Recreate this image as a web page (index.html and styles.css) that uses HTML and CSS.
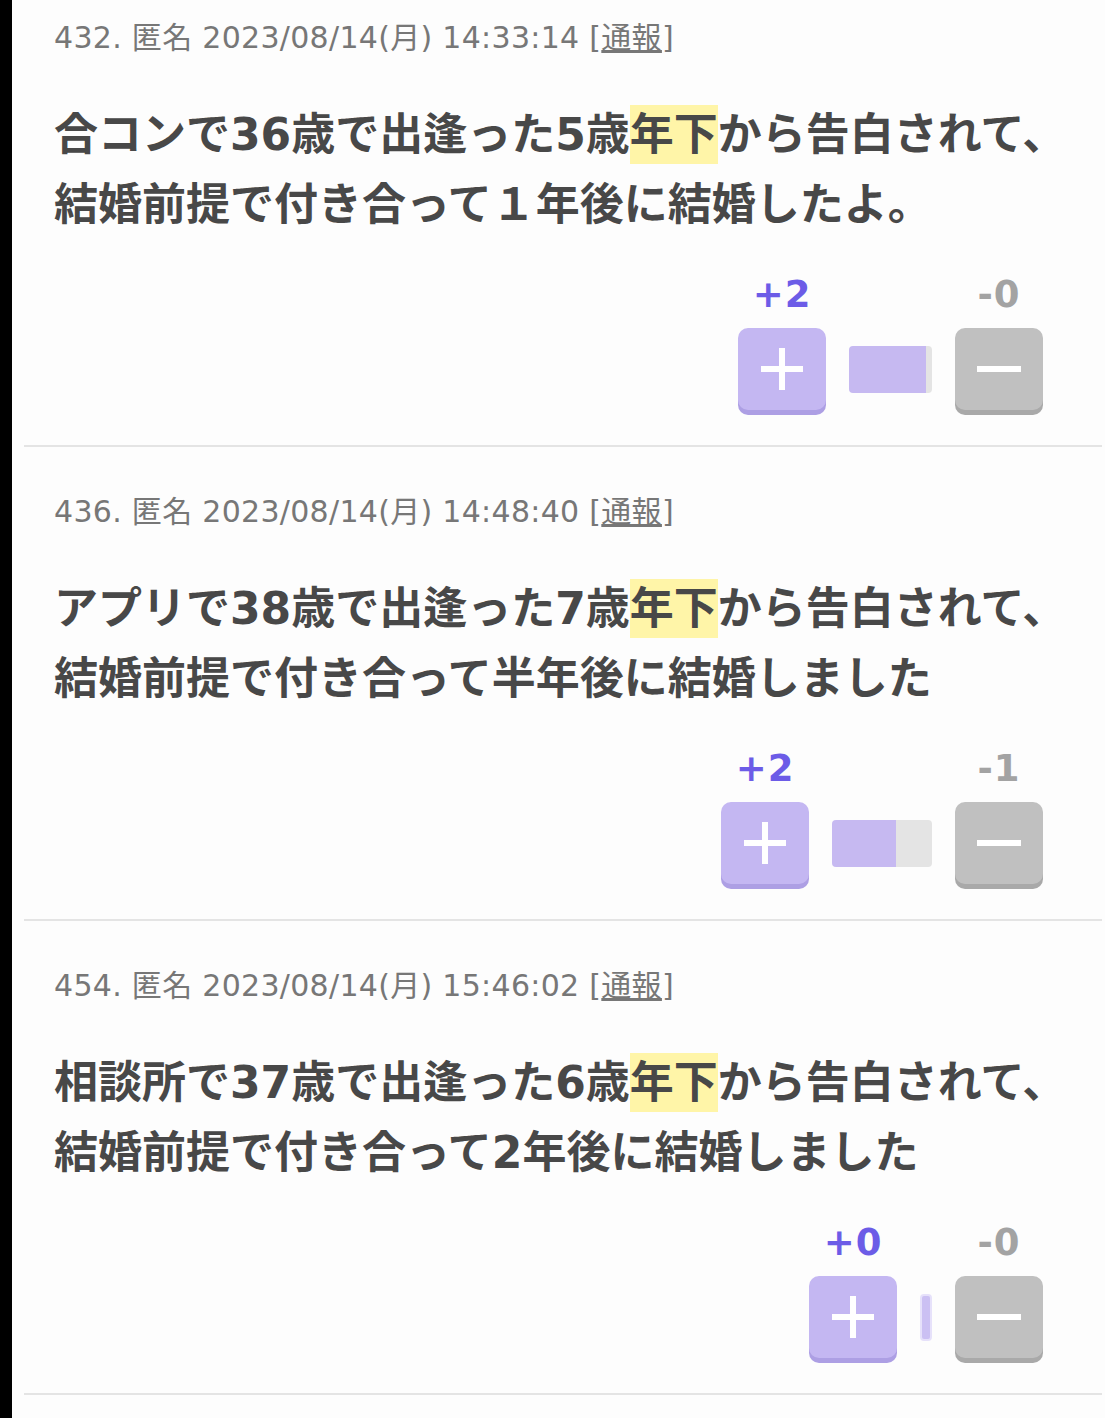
FILE: index.html
```html
<!DOCTYPE html>
<html lang="ja">
<head>
<meta charset="utf-8">
<title>comments</title>
<link rel="stylesheet" href="styles.css">
</head>
<body>
<div class="thread">
  <article class="post">
    <div class="meta">432. 匿名 2023/08/14(月) 14:33:14 [<a class="report" href="#">通報</a>]</div>
    <p class="body">合コンで36歳で出逢った5歳<span class="hl">年下</span>から告白されて、<br>結婚前提で付き合って１年後に結婚したよ。</p>
    <div class="votes">
      <div class="count count-plus">+2</div>
      <div class="count count-minus">-0</div>
      <button class="btn btn-plus" type="button"><svg width="42" height="42" viewBox="0 0 42 42"><path d="M21 0v42M0 21h42" stroke="#fff" stroke-width="6"/></svg></button>
      <div class="bar" style="width:83px;--p:93%"></div>
      <button class="btn btn-minus" type="button"><svg width="44" height="6" viewBox="0 0 44 6"><rect width="44" height="6" fill="#fff"/></svg></button>
    </div>
  </article>
  <article class="post">
    <div class="meta">436. 匿名 2023/08/14(月) 14:48:40 [<a class="report" href="#">通報</a>]</div>
    <p class="body">アプリで38歳で出逢った7歳<span class="hl">年下</span>から告白されて、<br>結婚前提で付き合って半年後に結婚しました</p>
    <div class="votes">
      <div class="count count-plus">+2</div>
      <div class="count count-minus">-1</div>
      <button class="btn btn-plus" type="button"><svg width="42" height="42" viewBox="0 0 42 42"><path d="M21 0v42M0 21h42" stroke="#fff" stroke-width="6"/></svg></button>
      <div class="bar" style="width:100px;--p:64%"></div>
      <button class="btn btn-minus" type="button"><svg width="44" height="6" viewBox="0 0 44 6"><rect width="44" height="6" fill="#fff"/></svg></button>
    </div>
  </article>
  <article class="post">
    <div class="meta">454. 匿名 2023/08/14(月) 15:46:02 [<a class="report" href="#">通報</a>]</div>
    <p class="body">相談所で37歳で出逢った6歳<span class="hl">年下</span>から告白されて、<br>結婚前提で付き合って2年後に結婚しました</p>
    <div class="votes">
      <div class="count count-plus">+0</div>
      <div class="count count-minus">-0</div>
      <button class="btn btn-plus" type="button"><svg width="42" height="42" viewBox="0 0 42 42"><path d="M21 0v42M0 21h42" stroke="#fff" stroke-width="6"/></svg></button>
      <div class="bar bar-empty" style="width:12px;--p:100%"></div>
      <button class="btn btn-minus" type="button"><svg width="44" height="6" viewBox="0 0 44 6"><rect width="44" height="6" fill="#fff"/></svg></button>
    </div>
  </article>
</div>
</body>
</html>
```
FILE: styles.css
```css
html, body {
  margin: 0;
  padding: 0;
}
body {
  background: #000;
  font-family: "DejaVu Sans", "Noto Sans CJK JP", sans-serif;
}
.thread {
  margin-left: 12px;
  background: #fdfdfd;
  padding: 0 3px 0 12px;
  min-height: 1418px;
}
.post {
  padding: 45px 59px 35px 30px;
  border-bottom: 2px solid #e4e4e4;
}
.post:first-child {
  padding-top: 18px;
}
.meta {
  font-size: 30px;
  line-height: 40px;
  letter-spacing: 0.3px;
  color: #777;
  white-space: nowrap;
}
.report {
  color: #777;
  text-decoration: underline;
}
.body {
  margin: 42px 0 0;
  font-size: 44px;
  line-height: 70px;
  font-weight: 700;
  color: #484848;
  white-space: nowrap;
}
.hl {
  background: #fff5a8;
  padding: 4px 0;
}
.votes {
  margin-top: 35px;
  display: grid;
  grid-template-columns: 88px auto 88px;
  grid-template-rows: 40px 82px;
  column-gap: 23px;
  row-gap: 13px;
  justify-content: end;
}
.count {
  font-size: 37px;
  line-height: 40px;
  font-weight: 700;
  letter-spacing: 1px;
  text-align: center;
  grid-row: 1;
}
.count-plus {
  grid-column: 1;
  color: #6c5ce7;
}
.count-minus {
  grid-column: 3;
  color: #a3a3a3;
}
.btn {
  grid-row: 2;
  width: 88px;
  height: 82px;
  border: 0;
  padding: 0;
  border-radius: 10px;
  display: flex;
  align-items: center;
  justify-content: center;
}
.btn-plus {
  grid-column: 1;
  background: #c4b7f2;
  box-shadow: 0 5px 0 #ad9fe4;
}
.btn-minus {
  grid-column: 3;
  background: #c0c0c0;
  box-shadow: 0 5px 0 #a9a9a9;
}
.bar {
  grid-row: 2;
  grid-column: 2;
  align-self: center;
  height: 47px;
  border-radius: 4px;
  background: linear-gradient(to right, #c6b9f1 var(--p), #e4e4e4 var(--p));
}
.bar-empty {
  box-sizing: border-box;
  border: 2px solid #e6e1fa;
  background: #cbc0f3;
}
```
